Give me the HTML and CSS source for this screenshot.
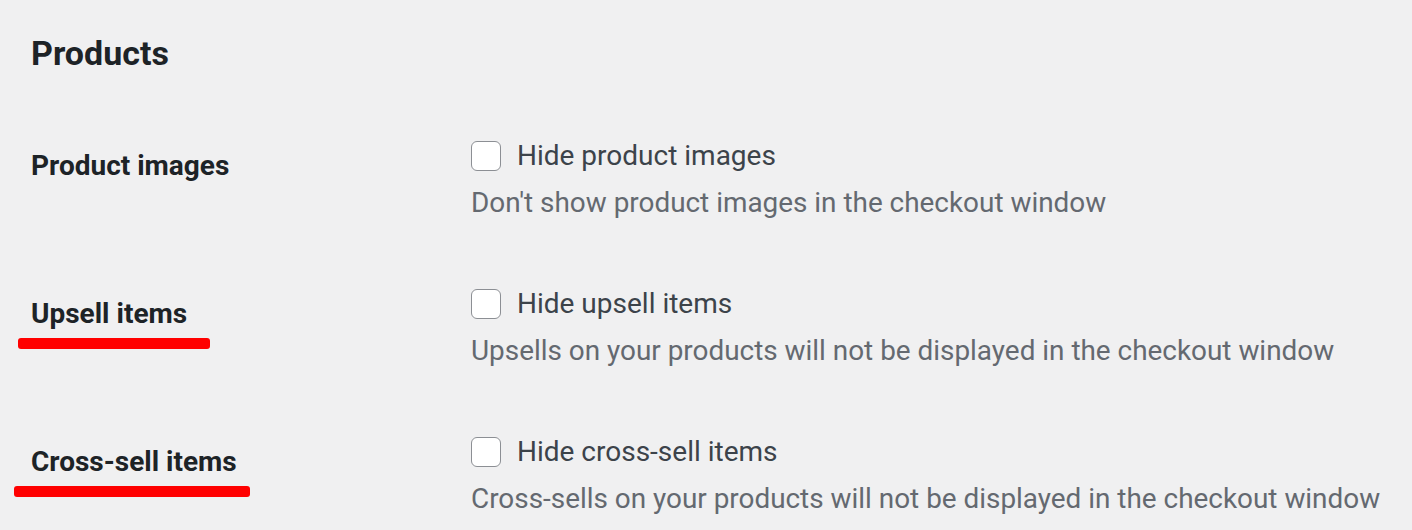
FILE: index.html
```html
<!DOCTYPE html>
<html>
<head>
<meta charset="utf-8">
<link rel="stylesheet" href="styles.css">
</head>
<body>
<div class="page">
  <h2 class="title">Products</h2>
  <div class="rows">
    <div class="row">
      <div class="label"><span class="label-text">Product images</span></div>
      <div class="field">
        <label class="check"><span class="box"></span><span>Hide product images</span></label>
        <p class="desc">Don't show product images in the checkout window</p>
      </div>
    </div>
    <div class="row">
      <div class="label"><span class="label-text">Upsell items</span><span class="mark mark-upsell"></span></div>
      <div class="field">
        <label class="check"><span class="box"></span><span>Hide upsell items</span></label>
        <p class="desc">Upsells on your products will not be displayed in the checkout window</p>
      </div>
    </div>
    <div class="row">
      <div class="label"><span class="label-text">Cross-sell items</span><span class="mark mark-cross"></span></div>
      <div class="field">
        <label class="check"><span class="box"></span><span>Hide cross-sell items</span></label>
        <p class="desc">Cross-sells on your products will not be displayed in the checkout window</p>
      </div>
    </div>
  </div>
</div>
</body>
</html>
```
FILE: styles.css
```css
html, body {
  margin: 0;
  padding: 0;
  background: #f0f0f1;
}
body {
  font-family: Roboto, "Liberation Sans", sans-serif;
  color: #1d2327;
  height: 530px;
  overflow: hidden;
}
.page {
  padding: 32px 0 0 31px;
}
.title {
  margin: 0;
  font-size: 34px;
  font-weight: 700;
  line-height: 42px;
}
.rows {
  display: flex;
  flex-direction: column;
  margin-top: 66px;
}
.row {
  display: flex;
  height: 148px;
}
.label {
  position: relative;
  width: 440px;
  flex: none;
  padding-top: 9px;
}
.label-text {
  font-size: 28px;
  font-weight: 700;
  line-height: 34px;
}
.mark {
  position: absolute;
  height: 11px;
  background: #ff0000;
  border-radius: 3px;
}
.mark-upsell {
  left: -13px;
  top: 50px;
  width: 192px;
}
.mark-cross {
  left: -17px;
  top: 50px;
  width: 236px;
}
.field {
  display: flex;
  flex-direction: column;
}
.check {
  display: flex;
  align-items: center;
  gap: 16px;
  font-size: 28px;
  line-height: 31px;
  color: #3c434a;
}
.box {
  width: 28px;
  height: 28px;
  border: 1.5px solid #8c8f94;
  border-radius: 6px;
  background: #fff;
  flex: none;
}
.desc {
  margin: 15px 0 0;
  font-size: 27.9px;
  line-height: 34px;
  color: #646970;
}
```
